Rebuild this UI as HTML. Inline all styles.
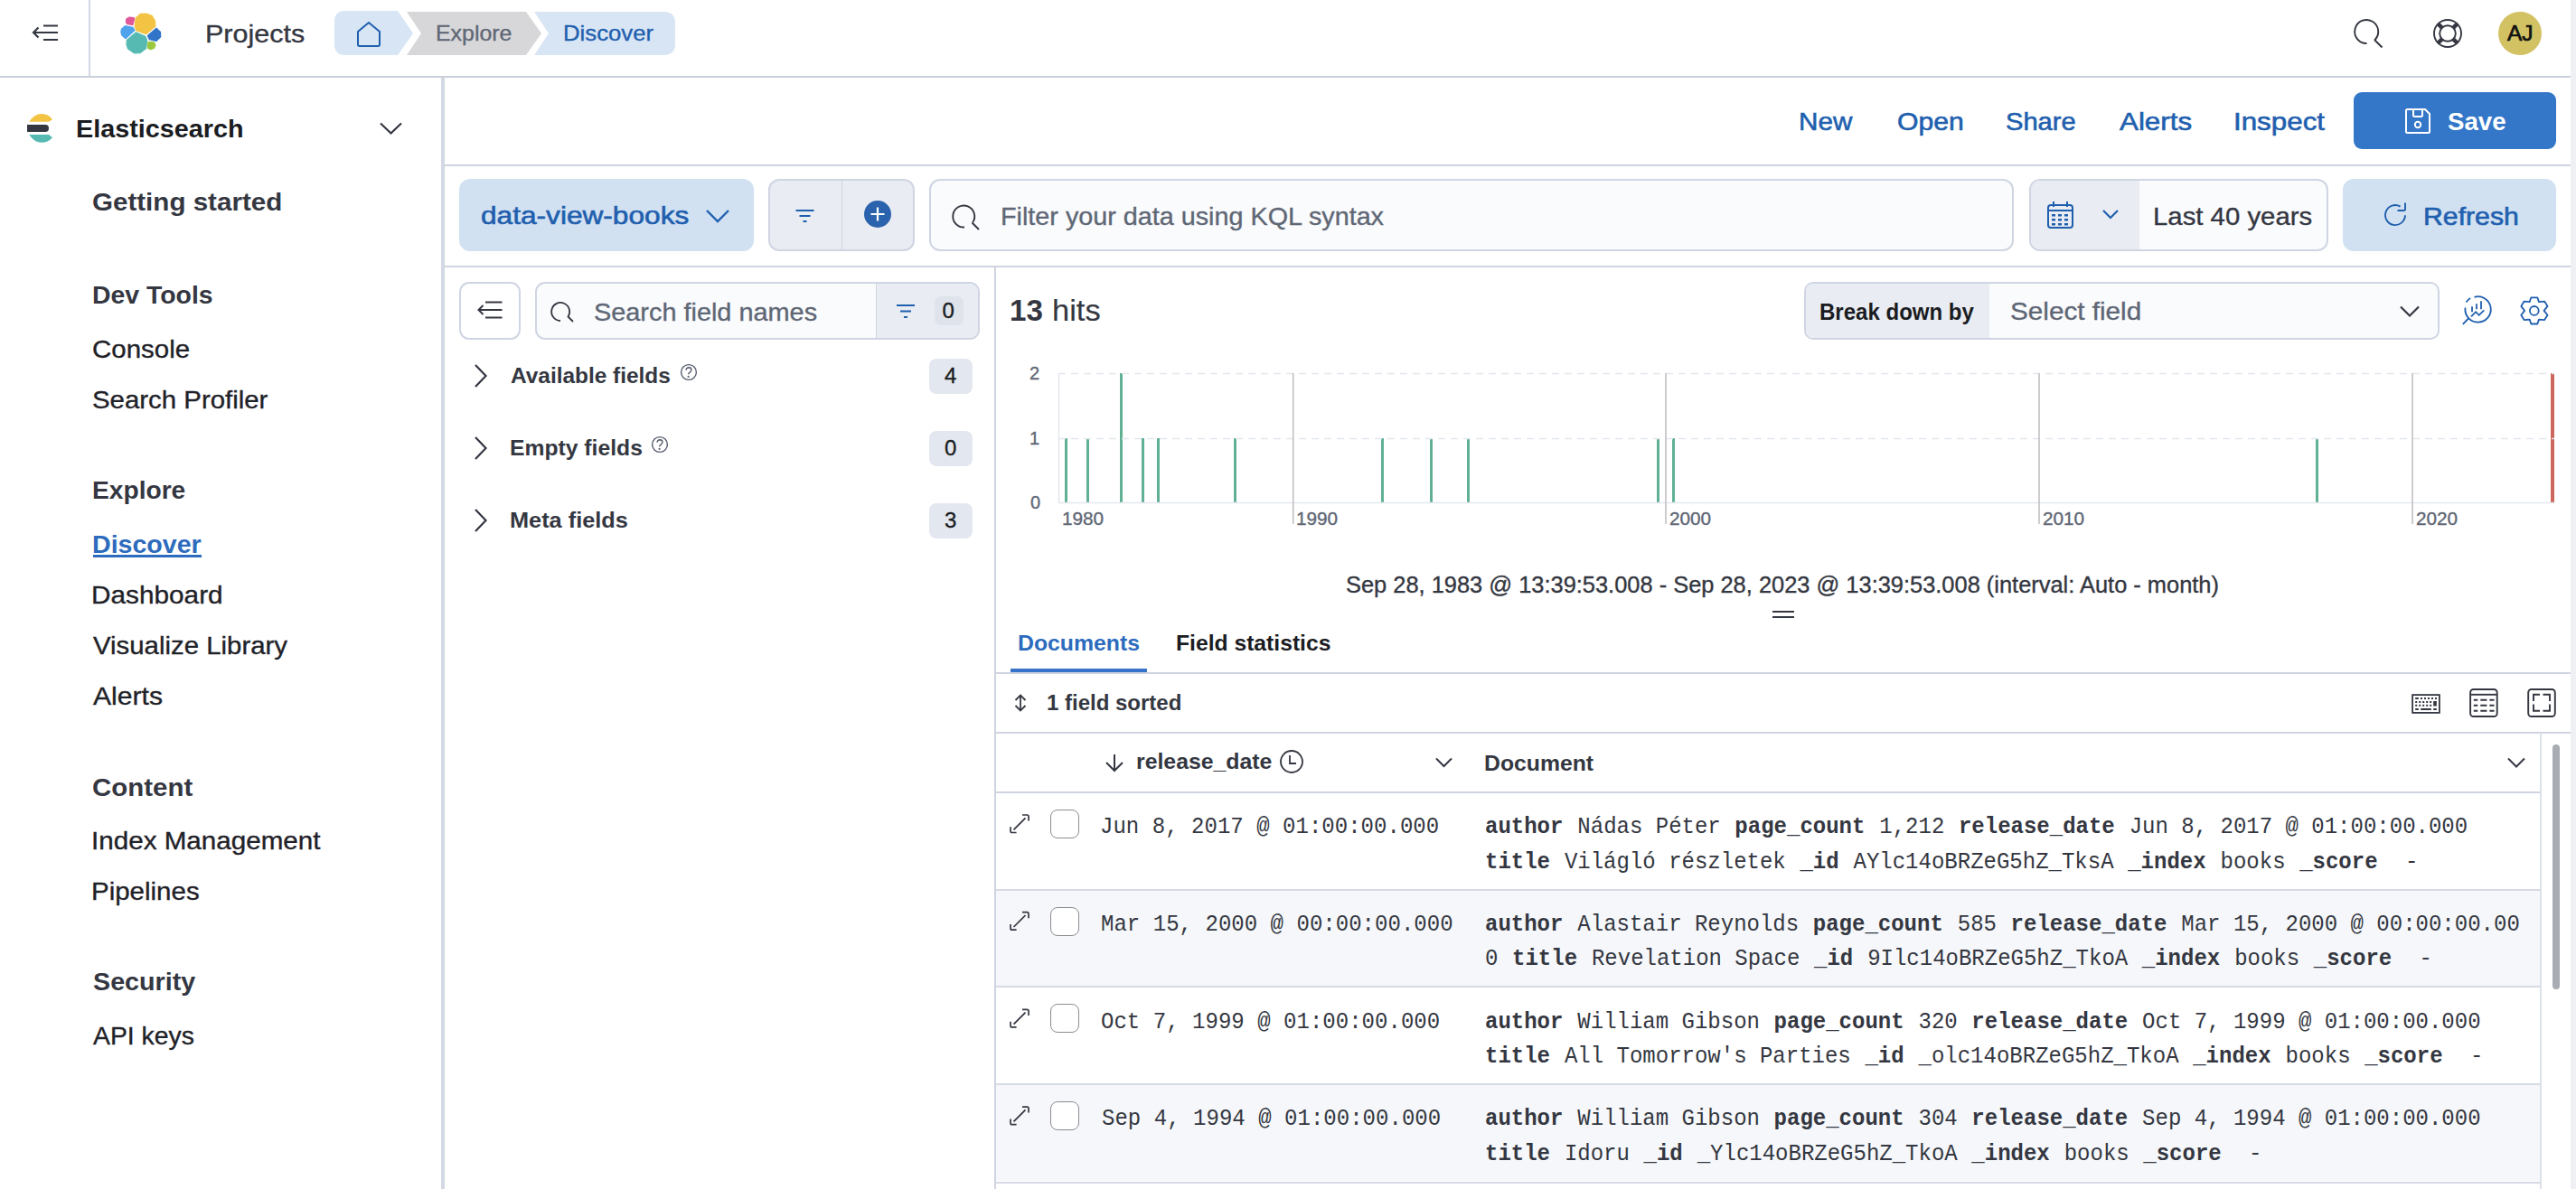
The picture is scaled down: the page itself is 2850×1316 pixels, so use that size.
<!DOCTYPE html>
<html><head><meta charset="utf-8"><title>Discover - Elastic</title>
<style>
html,body{margin:0;padding:0;background:#fff;width:2850px;height:1316px;overflow:hidden;}
#b>div,#t>div{position:absolute;white-space:nowrap;}
#b,#t{position:absolute;left:0;top:0;width:2850px;height:1316px;}
svg{position:absolute;left:0;top:0;}
</style></head><body>
<div id="b"><div style="left:2844px;top:0px;width:6px;height:1316px;background:#eff0f4;border-radius:0px;"></div><div style="left:0px;top:84px;width:2844px;height:2px;background:#cbd0dc;border-radius:0px;"></div><div style="left:98px;top:0px;width:2px;height:84px;background:#d3d8e4;border-radius:0px;"></div><div style="left:488px;top:86px;width:4px;height:1230px;background:#d3d8e4;border-radius:0px;"></div><div style="left:492px;top:182px;width:2352px;height:2px;background:#cfd4e0;border-radius:0px;"></div><div style="left:492px;top:294px;width:2352px;height:2px;background:#cfd4e0;border-radius:0px;"></div><div style="left:1100px;top:296px;width:2px;height:1020px;background:#cfd4e0;border-radius:0px;"></div><div style="left:103px;top:614px;width:119.8px;height:2.5px;background:#2c6bbd;border-radius:0px;"></div><div style="left:2604px;top:102px;width:224px;height:63px;background:#3477c8;border-radius:9px;"></div><div style="left:508px;top:198px;width:326px;height:80px;background:#d1e1f2;border-radius:12px;"></div><div style="left:850px;top:198px;width:162px;height:80px;background:#e9ecf2;border:2px solid #cfd5e2;box-sizing:border-box;border-radius:12px;"></div><div style="left:930.5px;top:200px;width:1.5px;height:76px;background:#cfd5e2;border-radius:0px;"></div><div style="left:1028px;top:198px;width:1200px;height:80px;background:#fafbfd;border:2px solid #cfd5e2;box-sizing:border-box;border-radius:12px;"></div><div style="left:2245px;top:198px;width:331px;height:80px;background:#fafbfd;border:2px solid #cfd5e2;box-sizing:border-box;overflow:hidden;border-radius:12px;"><div style="position:absolute;left:0px;top:0;width:120px;height:100%;background:#e9ecf2"></div></div><div style="left:2592px;top:198px;width:236px;height:80px;background:#d1e1f2;border-radius:12px;"></div><div style="left:508px;top:312px;width:68px;height:64px;background:#fff;border:2px solid #cfd5e2;box-sizing:border-box;border-radius:11px;"></div><div style="left:592px;top:312px;width:492px;height:64px;background:#fafbfd;border:2px solid #cfd5e2;box-sizing:border-box;overflow:hidden;border-radius:11px;"><div style="position:absolute;left:374.5px;top:0;width:120px;height:100%;background:#e9ecf2"></div><div style="position:absolute;left:374.5px;top:0;width:1.5px;height:100%;background:#cfd5e2"></div></div><div style="left:1034px;top:328px;width:32px;height:32px;background:#dfe3eb;border-radius:7px;"></div><div style="left:1028px;top:397px;width:48px;height:39px;background:#e3e7ef;border-radius:8px;"></div><div style="left:1028px;top:477px;width:48px;height:39px;background:#e3e7ef;border-radius:8px;"></div><div style="left:1028px;top:557px;width:48px;height:39px;background:#e3e7ef;border-radius:8px;"></div><div style="left:1996px;top:312px;width:703px;height:64px;background:#fafbfd;border:2px solid #cfd5e2;box-sizing:border-box;overflow:hidden;border-radius:10px;"><div style="position:absolute;left:0px;top:0;width:203px;height:100%;background:#e9ecf2"></div></div><div style="left:1178.0px;top:485px;width:3px;height:71.5px;background:#60b194;border-radius:0px;"></div><div style="left:1201.9px;top:485px;width:3px;height:71.5px;background:#60b194;border-radius:0px;"></div><div style="left:1262.8px;top:485px;width:3px;height:71.5px;background:#60b194;border-radius:0px;"></div><div style="left:1279.9px;top:485px;width:3px;height:71.5px;background:#60b194;border-radius:0px;"></div><div style="left:1364.5px;top:485px;width:3px;height:71.5px;background:#60b194;border-radius:0px;"></div><div style="left:1527.5px;top:485px;width:3px;height:71.5px;background:#60b194;border-radius:0px;"></div><div style="left:1581.5px;top:485px;width:3px;height:71.5px;background:#60b194;border-radius:0px;"></div><div style="left:1622.5px;top:485px;width:3px;height:71.5px;background:#60b194;border-radius:0px;"></div><div style="left:1833.0px;top:485px;width:3px;height:71.5px;background:#60b194;border-radius:0px;"></div><div style="left:1850.0px;top:485px;width:3px;height:71.5px;background:#60b194;border-radius:0px;"></div><div style="left:2562.3px;top:485px;width:3px;height:71.5px;background:#60b194;border-radius:0px;"></div><div style="left:1238.9px;top:413px;width:3px;height:143.5px;background:#60b194;border-radius:0px;"></div><div style="left:2822px;top:413px;width:4px;height:143.5px;background:#cd665c;border-radius:0px;"></div><div style="left:1961px;top:675.5px;width:24px;height:2px;background:#343741;border-radius:0px;"></div><div style="left:1961px;top:682px;width:24px;height:2px;background:#343741;border-radius:0px;"></div><div style="left:1102px;top:744px;width:1742px;height:2px;background:#cfd4e0;border-radius:0px;"></div><div style="left:1118px;top:740px;width:151px;height:4px;background:#3574c8;border-radius:0px;"></div><div style="left:1102px;top:810px;width:1742px;height:2px;background:#cfd4e0;border-radius:0px;"></div><div style="left:1102px;top:876px;width:1709px;height:2px;background:#cfd4e0;border-radius:0px;"></div><div style="left:2810px;top:811px;width:2px;height:505px;background:#dde2ea;border-radius:0px;"></div><div style="left:2824px;top:824px;width:8px;height:271px;background:#a9acb3;border-radius:4px;"></div><div style="left:1162px;top:896.0px;width:32px;height:32px;background:#fff;border:1.8px solid #8a8c90;box-sizing:border-box;border-radius:8px;"></div><div style="left:1102px;top:985.7px;width:1708px;height:105.7px;background:#f5f7fa;border-radius:0px;"></div><div style="left:1102px;top:983.7px;width:1709px;height:2px;background:#d5dae4;border-radius:0px;"></div><div style="left:1162px;top:1003.7px;width:32px;height:32px;background:#fff;border:1.8px solid #8a8c90;box-sizing:border-box;border-radius:8px;"></div><div style="left:1102px;top:1091.4px;width:1709px;height:2px;background:#d5dae4;border-radius:0px;"></div><div style="left:1162px;top:1111.4px;width:32px;height:32px;background:#fff;border:1.8px solid #8a8c90;box-sizing:border-box;border-radius:8px;"></div><div style="left:1102px;top:1201.1px;width:1708px;height:105.7px;background:#f5f7fa;border-radius:0px;"></div><div style="left:1102px;top:1199.1px;width:1709px;height:2px;background:#d5dae4;border-radius:0px;"></div><div style="left:1162px;top:1219.1000000000001px;width:32px;height:32px;background:#fff;border:1.8px solid #8a8c90;box-sizing:border-box;border-radius:8px;"></div><div style="left:1102px;top:1308px;width:1709px;height:2px;background:#d5dae4;border-radius:0px;"></div></div>
<svg width="2850" height="1316" viewBox="0 0 2850 1316"><g stroke="#343741" stroke-width="2.2" fill="none" stroke-linecap="butt"><path d="M48 28.5H64M37 36H64M48 44H64"/><path d="M42.5 30.5L37 36L42.5 41.5" stroke-linejoin="miter"/></g><g transform="translate(128,10)" stroke-linejoin="round" stroke-width="1.2"><path fill="#e0579a" stroke="#e0579a" d="M11.8 10.9L15 9.1L20 9.5L20.7 10.9L18.8 17.7L12.3 16.3L11.4 14.1Z"/><path fill="#f3c343" stroke="#f3c343" d="M22.3 10L27.2 5.4L33.6 5L40 7.3L43.6 13.2L43.8 19.1L33.6 27.7L22.7 23.6L21.1 18.6Z"/><path fill="#4fa3ec" stroke="#4fa3ec" d="M6.4 22.3L10.4 18.6L19.1 20.4L20.9 23.6L10.9 32.7L6.8 29.1L5.9 25.4Z"/><path fill="#3275c8" stroke="#3275c8" d="M35.4 29.5L45 21.1L49.5 25.4L49.7 30.9L45 35.4L37.2 33.6Z"/><path fill="#56bab3" stroke="#56bab3" d="M12.3 34.5L22.3 25.9L32.7 30.2L34.7 34.5L33.6 43.6L27.2 48.6L20.4 48.8L13.6 44L12 39Z"/><path fill="#9bc83c" stroke="#9bc83c" d="M36.3 36.3L42.2 36.8L44 39.5L42.7 43.1L39 44.7L35.9 43.6L35.4 40Z"/></g><path fill="#d8e5f5" d="M382 12H440L457 37L440 61H382Q370 61 370 49V24Q370 12 382 12Z"/><path fill="#d7d7d9" d="M450 13H582L599 37L582 61H450L466 37Z"/><path fill="#d8e5f5" d="M591 13H734Q747 13 747 25V49Q747 61 734 61H591L607 37Z"/><path fill="none" stroke="#1f5fae" stroke-width="2" stroke-linejoin="round" d="M396 35L408 25L420 35V49.3Q420 51 418.3 51H397.7Q396 51 396 49.3Z"/><g fill="none" stroke="#343741" stroke-width="1.9"><path d="M2618.5 48A13 13 0 1 1 2627.2 44.4"/><path d="M2627 44L2635.5 52.5"/></g><g fill="none" stroke="#343741" stroke-width="1.9"><circle cx="2708" cy="37" r="15"/><circle cx="2708" cy="37" r="8.8"/></g><g stroke="#343741" stroke-width="4.5"><path d="M2697.5 26.5L2701.7 30.7M2718.5 26.5L2714.3 30.7M2697.5 47.5L2701.7 43.3M2718.5 47.5L2714.3 43.3"/></g><circle cx="2788" cy="37" r="24" fill="#d3c264"/><g><path fill="#f3c343" d="M32.2 134.8Q38 126 46 126Q53.5 126 58 132.2L54 134.8Z"/><path fill="#343741" d="M30 138H50.2Q54 138 54 142Q54 146 50.2 146H30Z"/><path fill="#56bab3" d="M32.2 149H54L58 152.2Q53 157.8 46 157.8Q38 157.8 32.2 149Z"/></g><path d="M421 136.5L432.5 147.5L444 136.5" fill="none" stroke="#343741" stroke-width="2.2"/><g fill="none" stroke="#fff" stroke-width="2" stroke-linejoin="round"><path d="M2663.5 121H2683L2688 126V145.5Q2688 147 2686.5 147H2663.5Q2662 147 2662 145.5V122.5Q2662 121 2663.5 121Z"/><path d="M2670 121V127.5Q2670 129 2671.5 129H2678.5Q2680 129 2680 127.5V121"/><circle cx="2675" cy="138" r="3.2"/></g><path d="M782 233L794 245L806 233" fill="none" stroke="#1f5fae" stroke-width="2.4"/><g stroke="#1f5fae" stroke-width="2"><path d="M880.5 233H900.5M884.5 239H896.5M888.5 245H892.5"/></g><circle cx="971" cy="237" r="15" fill="#2b62ad"/><path d="M971 229.5V244.5M963.5 237H978.5" stroke="#fff" stroke-width="2.2"/><g fill="none" stroke="#343741" stroke-width="1.9"><path d="M1067 251.5A12 12 0 1 1 1076 246.5"/><path d="M1075.5 246.5L1083 254"/></g><g fill="none" stroke="#1f5fae" stroke-width="2"><rect x="2266" y="227" width="27" height="25" rx="3"/><path d="M2272 223V229M2287 223V229M2266 233H2293"/></g><g fill="#1f5fae"><rect x="2270" y="237" width="4" height="2.5"/><rect x="2277" y="237" width="4" height="2.5"/><rect x="2284" y="237" width="4" height="2.5"/><rect x="2270" y="242" width="4" height="2.5"/><rect x="2277" y="242" width="4" height="2.5"/><rect x="2284" y="242" width="4" height="2.5"/><rect x="2270" y="247" width="4" height="2.5"/><rect x="2277" y="247" width="4" height="2.5"/><rect x="2284" y="247" width="4" height="2.5"/></g><path d="M2327 233L2335 241L2343 233" fill="none" stroke="#1f5fae" stroke-width="2.2"/><g fill="none" stroke="#1f5fae" stroke-width="1.9"><path d="M2661 238.3A11 11 0 1 1 2655.6 228.6"/><path d="M2661 224.5V232.2L2659.8 233H2652.5"/></g><g stroke="#343741" stroke-width="2" fill="none"><path d="M537 334.5H555.5M529.5 343H555.5M537 351.5H555.5"/><path d="M534.5 338L529.5 343L534.5 348"/></g><g fill="none" stroke="#343741" stroke-width="1.8"><path d="M620 355A10 10 0 1 1 628.5 350.5"/><path d="M628 350L634 356"/></g><g stroke="#1f5fae" stroke-width="1.8"><path d="M992 338H1012M996 344.5H1008M1000 351H1004"/></g><path d="M526 404L537.5 416L526 428" fill="none" stroke="#343741" stroke-width="2.2"/><g fill="none" stroke="#555c6b" stroke-width="1.4"><circle cx="762" cy="412" r="8.4"/><path d="M759 409.6Q759.4 406.8 762.1 406.7Q764.9 406.7 764.9 409.2Q764.9 411 762.9 412.4Q761.6 413.3 761.6 414.3"/></g><circle cx="761.6" cy="416.8" r="1.1" fill="#555c6b"/><path d="M526 484L537.5 496L526 508" fill="none" stroke="#343741" stroke-width="2.2"/><g fill="none" stroke="#555c6b" stroke-width="1.4"><circle cx="730" cy="492" r="8.4"/><path d="M727 489.6Q727.4 486.8 730.1 486.7Q732.9 486.7 732.9 489.2Q732.9 491 730.9 492.4Q729.6 493.3 729.6 494.3"/></g><circle cx="729.6" cy="496.8" r="1.1" fill="#555c6b"/><path d="M526 564L537.5 576L526 588" fill="none" stroke="#343741" stroke-width="2.2"/><path d="M2656 339.5L2666 349.5L2676 339.5" fill="none" stroke="#343741" stroke-width="2.2"/><g fill="none" stroke="#1f5fae" stroke-width="1.8"><path d="M2737.5 328.8A14.2 14.2 0 1 1 2727.5 340.5"/><path d="M2728.5 334.5A14.2 14.2 0 0 1 2733.2 330"/><path d="M2731 352.5L2724.8 358.8"/><path d="M2734 350.3L2739.1 345.2L2742.7 348.8L2748.3 343.3"/><path d="M2735 339.2V345.2M2740 336.3V342.3M2745 333.2V342.3"/></g><g fill="none" stroke="#1f5fae" stroke-width="1.8" stroke-linejoin="round"><circle cx="2803.8" cy="343.9" r="4.9"/><path d="M2800.3 329.3H2807.3L2809 334.1L2815.2 333.6L2818.5 338.9L2814.6 343.9L2818.5 348.8L2815.2 354.1L2809 353.6L2807.3 358.5H2800.3L2798.7 353.6L2792.6 354.1L2789.3 348.8L2793.1 343.9L2789.3 338.9L2792.6 333.6L2798.7 334.1Z"/></g><g stroke="#e3e7ee" stroke-width="1.5" stroke-dasharray="8 6"><path d="M1171 413.5H2826M1171 485.5H2826"/></g><path d="M1171 556.5H2826" stroke="#e3e7ee" stroke-width="1.5"/><path d="M1171.5 413V557" stroke="#e3e7ee" stroke-width="1.5"/><path d="M1430.7 413V580" stroke="#bdbdbd" stroke-width="1.5"/><path d="M1843 413V580" stroke="#bdbdbd" stroke-width="1.5"/><path d="M2256 413V580" stroke="#bdbdbd" stroke-width="1.5"/><path d="M2669 413V580" stroke="#bdbdbd" stroke-width="1.5"/><g fill="none" stroke="#343741" stroke-width="1.8"><path d="M1129 770V786"/><path d="M1123.5 775L1129 769.5L1134.5 775M1123.5 781L1129 786.5L1134.5 781"/></g><g fill="none" stroke="#343741" stroke-width="1.8"><rect x="2669.1" y="769.1" width="29.8" height="19.8"/></g><g fill="#343741"><rect x="2672.2" y="772" width="3.6" height="2"/><rect x="2678" y="772" width="2" height="2"/><rect x="2682" y="772" width="2" height="2"/><rect x="2686" y="772" width="2" height="2"/><rect x="2690" y="772" width="2" height="2"/><rect x="2694" y="772" width="2" height="2"/><rect x="2672.2" y="776" width="2" height="2"/><rect x="2676.2" y="776" width="2" height="2"/><rect x="2680.2" y="776" width="2" height="2"/><rect x="2684.2" y="776" width="2" height="2"/><rect x="2688.2" y="776" width="2" height="2"/><rect x="2672.2" y="779.8" width="2" height="2"/><rect x="2676.2" y="779.8" width="2" height="2"/><rect x="2680.2" y="779.8" width="2" height="2"/><rect x="2684.2" y="779.8" width="2" height="2"/><rect x="2688.2" y="779.8" width="2" height="2"/><rect x="2692.2" y="776" width="3.6" height="5.5"/><rect x="2672.2" y="784" width="3.6" height="2"/><rect x="2678.2" y="784" width="11.6" height="2"/><rect x="2692.2" y="784" width="3.6" height="2"/></g><g fill="none" stroke="#343741" stroke-width="1.9"><rect x="2733.1" y="763" width="29.6" height="30" rx="3.5"/><path d="M2733 768.8H2763"/><path d="M2736.8 774.7H2741.3M2744.3 774.7H2751.4M2754.4 774.7H2759.5M2736.8 780.8H2741.3M2744.3 780.8H2751.4M2754.4 780.8H2759.5M2736.8 786.8H2741.3M2744.3 786.8H2751.4M2754.4 786.8H2759.5"/></g><g fill="none" stroke="#343741" stroke-width="1.9"><rect x="2797.2" y="763" width="29.6" height="30" rx="3.5"/><path d="M2803 776V768.7H2810M2813.5 768.7H2821V776M2821 779.5V786.8H2813.5M2810 786.8H2803V779.5"/></g><g fill="none" stroke="#343741" stroke-width="2"><path d="M1233 835V853"/><path d="M1224 844L1233 853L1242 844"/></g><g fill="none" stroke="#343741" stroke-width="1.8"><circle cx="1429" cy="843" r="12"/><path d="M1427 836V845H1434"/></g><path d="M1589 839.5L1597.5 848L1606 839.5" fill="none" stroke="#343741" stroke-width="2"/><path d="M2775 839.5L2784 848.5L2793 839.5" fill="none" stroke="#343741" stroke-width="2"/><g fill="none" stroke="#343741" stroke-width="1.7"><path d="M1121.5 918.3L1134.5 905.3"/><path d="M1131 902.0H1136.3Q1138 902.0 1138 903.6999999999999V908.5M1118 915.3V919.8Q1118 921.5 1119.7 921.5H1124.6"/></g><g fill="none" stroke="#343741" stroke-width="1.7"><path d="M1121.5 1026.0L1134.5 1013.0"/><path d="M1131 1009.7H1136.3Q1138 1009.7 1138 1011.4V1016.2M1118 1023.0V1027.5Q1118 1029.2 1119.7 1029.2H1124.6"/></g><g fill="none" stroke="#343741" stroke-width="1.7"><path d="M1121.5 1133.7L1134.5 1120.7"/><path d="M1131 1117.4H1136.3Q1138 1117.4 1138 1119.1000000000001V1123.9M1118 1130.7V1135.2Q1118 1136.9 1119.7 1136.9H1124.6"/></g><g fill="none" stroke="#343741" stroke-width="1.7"><path d="M1121.5 1241.4L1134.5 1228.4"/><path d="M1131 1225.1000000000001H1136.3Q1138 1225.1000000000001 1138 1226.8000000000002V1231.6000000000001M1118 1238.4V1242.9Q1118 1244.6000000000001 1119.7 1244.6000000000001H1124.6"/></g></svg>
<div id="t"><div style="left:226.82px;top:24px;font:28px/28px 'Liberation Sans', sans-serif;color:#343741;letter-spacing:0.000px;transform:scaleX(1.0902);transform-origin:0 0;-webkit-text-stroke:0.35px #343741;">Projects</div><div style="left:481.96px;top:25px;font:24px/24px 'Liberation Sans', sans-serif;color:#5f6775;letter-spacing:0.000px;transform:scaleX(1.0371);transform-origin:0 0;-webkit-text-stroke:0.35px #5f6775;">Explore</div><div style="left:622.93px;top:25px;font:24px/24px 'Liberation Sans', sans-serif;color:#1f5fae;letter-spacing:0.000px;transform:scaleX(1.0719);transform-origin:0 0;-webkit-text-stroke:0.35px #1f5fae;">Discover</div><div style="left:2774.00px;top:25px;font:24px/24px 'Liberation Sans', sans-serif;color:#111;letter-spacing:0.000px;transform:scaleX(1.0182);transform-origin:0 0;-webkit-text-stroke:0.7px #111;">AJ</div><div style="left:83.97px;top:129px;font:bold 28px/28px 'Liberation Sans', sans-serif;color:#1a1c21;letter-spacing:0.000px;transform:scaleX(1.0277);transform-origin:0 0;">Elasticsearch</div><div style="left:101.94px;top:209.5px;font:bold 28px/28px 'Liberation Sans', sans-serif;color:#343741;letter-spacing:0.000px;transform:scaleX(1.0557);transform-origin:0 0;">Getting started</div><div style="left:101.99px;top:313px;font:bold 28px/28px 'Liberation Sans', sans-serif;color:#343741;letter-spacing:0.000px;transform:scaleX(1.0142);transform-origin:0 0;">Dev Tools</div><div style="left:101.95px;top:372.7px;font:28px/28px 'Liberation Sans', sans-serif;color:#1f2228;letter-spacing:0.000px;transform:scaleX(1.0518);transform-origin:0 0;-webkit-text-stroke:0.35px #1f2228;">Console</div><div style="left:101.95px;top:429px;font:28px/28px 'Liberation Sans', sans-serif;color:#1f2228;letter-spacing:0.000px;transform:scaleX(1.0497);transform-origin:0 0;-webkit-text-stroke:0.35px #1f2228;">Search Profiler</div><div style="left:101.99px;top:529px;font:bold 28px/28px 'Liberation Sans', sans-serif;color:#343741;letter-spacing:0.000px;transform:scaleX(1.0056);transform-origin:0 0;">Explore</div><div style="left:101.98px;top:589px;font:bold 28px/28px 'Liberation Sans', sans-serif;color:#2c6bbd;letter-spacing:0.000px;transform:scaleX(1.0205);transform-origin:0 0;">Discover</div><div style="left:100.87px;top:645px;font:28px/28px 'Liberation Sans', sans-serif;color:#1f2228;letter-spacing:0.000px;transform:scaleX(1.0629);transform-origin:0 0;-webkit-text-stroke:0.35px #1f2228;">Dashboard</div><div style="left:103.00px;top:701px;font:28px/28px 'Liberation Sans', sans-serif;color:#1f2228;letter-spacing:0.000px;transform:scaleX(1.0492);transform-origin:0 0;-webkit-text-stroke:0.35px #1f2228;">Visualize Library</div><div style="left:103.00px;top:757px;font:28px/28px 'Liberation Sans', sans-serif;color:#1f2228;letter-spacing:0.000px;transform:scaleX(1.0769);transform-origin:0 0;-webkit-text-stroke:0.35px #1f2228;">Alerts</div><div style="left:101.95px;top:857.5px;font:bold 28px/28px 'Liberation Sans', sans-serif;color:#343741;letter-spacing:0.000px;transform:scaleX(1.0514);transform-origin:0 0;">Content</div><div style="left:100.89px;top:917px;font:28px/28px 'Liberation Sans', sans-serif;color:#1f2228;letter-spacing:0.000px;transform:scaleX(1.0575);transform-origin:0 0;-webkit-text-stroke:0.35px #1f2228;">Index Management</div><div style="left:100.89px;top:972.5px;font:28px/28px 'Liberation Sans', sans-serif;color:#1f2228;letter-spacing:0.000px;transform:scaleX(1.0531);transform-origin:0 0;-webkit-text-stroke:0.35px #1f2228;">Pipelines</div><div style="left:103.00px;top:1072.6px;font:bold 28px/28px 'Liberation Sans', sans-serif;color:#343741;letter-spacing:0.000px;transform:scaleX(1.0241);transform-origin:0 0;">Security</div><div style="left:103.00px;top:1132.5px;font:28px/28px 'Liberation Sans', sans-serif;color:#1f2228;letter-spacing:0.000px;transform:scaleX(1.0129);transform-origin:0 0;-webkit-text-stroke:0.35px #1f2228;">API keys</div><div style="left:1989.88px;top:121px;font:28px/28px 'Liberation Sans', sans-serif;color:#1f5fae;letter-spacing:0.000px;transform:scaleX(1.0585);transform-origin:0 0;-webkit-text-stroke:0.6px #1f5fae;">New</div><div style="left:2098.92px;top:121px;font:28px/28px 'Liberation Sans', sans-serif;color:#1f5fae;letter-spacing:0.000px;transform:scaleX(1.0770);transform-origin:0 0;-webkit-text-stroke:0.6px #1f5fae;">Open</div><div style="left:2218.96px;top:121px;font:28px/28px 'Liberation Sans', sans-serif;color:#1f5fae;letter-spacing:0.000px;transform:scaleX(1.0390);transform-origin:0 0;-webkit-text-stroke:0.6px #1f5fae;">Share</div><div style="left:2345.00px;top:121px;font:28px/28px 'Liberation Sans', sans-serif;color:#1f5fae;letter-spacing:0.000px;transform:scaleX(1.1194);transform-origin:0 0;-webkit-text-stroke:0.6px #1f5fae;">Alerts</div><div style="left:2470.76px;top:121px;font:28px/28px 'Liberation Sans', sans-serif;color:#1f5fae;letter-spacing:0.000px;transform:scaleX(1.1187);transform-origin:0 0;-webkit-text-stroke:0.6px #1f5fae;">Inspect</div><div style="left:2708.00px;top:121px;font:bold 28px/28px 'Liberation Sans', sans-serif;color:#fff;letter-spacing:0.000px;transform:scaleX(0.9873);transform-origin:0 0;">Save</div><div style="left:531.87px;top:225px;font:28px/28px 'Liberation Sans', sans-serif;color:#1f5fae;letter-spacing:0.000px;transform:scaleX(1.1294);transform-origin:0 0;-webkit-text-stroke:0.6px #1f5fae;">data-view-books</div><div style="left:1106.95px;top:226px;font:28px/28px 'Liberation Sans', sans-serif;color:#5f6775;letter-spacing:0.000px;transform:scaleX(1.0268);transform-origin:0 0;-webkit-text-stroke:0.35px #5f6775;">Filter your data using KQL syntax</div><div style="left:2381.90px;top:226px;font:28px/28px 'Liberation Sans', sans-serif;color:#343741;letter-spacing:0.000px;transform:scaleX(1.0479);transform-origin:0 0;-webkit-text-stroke:0.35px #343741;">Last 40 years</div><div style="left:2680.84px;top:226px;font:28px/28px 'Liberation Sans', sans-serif;color:#1f5fae;letter-spacing:0.000px;transform:scaleX(1.0797);transform-origin:0 0;-webkit-text-stroke:0.6px #1f5fae;">Refresh</div><div style="left:657.47px;top:332px;font:28px/28px 'Liberation Sans', sans-serif;color:#5f6775;letter-spacing:0.000px;transform:scaleX(1.0308);transform-origin:0 0;-webkit-text-stroke:0.35px #5f6775;">Search field names</div><div style="left:1042.50px;top:332px;font:24px/24px 'Liberation Sans', sans-serif;color:#1a1c21;letter-spacing:0.000px;-webkit-text-stroke:0.35px #1a1c21;">0</div><div style="left:565.00px;top:404px;font:bold 24px/24px 'Liberation Sans', sans-serif;color:#343741;letter-spacing:0.000px;transform:scaleX(1.0173);transform-origin:0 0;">Available fields</div><div style="left:1045.00px;top:403.5px;font:24px/24px 'Liberation Sans', sans-serif;color:#1a1c21;letter-spacing:0.000px;-webkit-text-stroke:0.35px #1a1c21;">4</div><div style="left:563.97px;top:484px;font:bold 24px/24px 'Liberation Sans', sans-serif;color:#343741;letter-spacing:0.000px;transform:scaleX(1.0293);transform-origin:0 0;">Empty fields</div><div style="left:1045.00px;top:483.5px;font:24px/24px 'Liberation Sans', sans-serif;color:#1a1c21;letter-spacing:0.000px;-webkit-text-stroke:0.35px #1a1c21;">0</div><div style="left:563.95px;top:564px;font:bold 24px/24px 'Liberation Sans', sans-serif;color:#343741;letter-spacing:0.000px;transform:scaleX(1.0547);transform-origin:0 0;">Meta fields</div><div style="left:1045.00px;top:563.5px;font:24px/24px 'Liberation Sans', sans-serif;color:#1a1c21;letter-spacing:0.000px;-webkit-text-stroke:0.35px #1a1c21;">3</div><div style="left:1116.99px;top:327px;font:bold 33px/33px 'Liberation Sans', sans-serif;color:#343741;letter-spacing:0.000px;transform:scaleX(1.0043);transform-origin:0 0;">13</div><div style="left:1163.91px;top:327px;font:33px/33px 'Liberation Sans', sans-serif;color:#343741;letter-spacing:0.000px;transform:scaleX(1.0439);transform-origin:0 0;-webkit-text-stroke:0.15px #343741;">hits</div><div style="left:2013.04px;top:333px;font:bold 25px/25px 'Liberation Sans', sans-serif;color:#1a1c21;letter-spacing:0.000px;transform:scaleX(0.9609);transform-origin:0 0;">Break down by</div><div style="left:2224.44px;top:331px;font:28px/28px 'Liberation Sans', sans-serif;color:#5f6775;letter-spacing:0.000px;transform:scaleX(1.0603);transform-origin:0 0;-webkit-text-stroke:0.35px #5f6775;">Select field</div><div style="left:1174.96px;top:564px;font:20px/20px 'Liberation Sans', sans-serif;color:#5f6775;letter-spacing:0.000px;transform:scaleX(1.0376);transform-origin:0 0;-webkit-text-stroke:0.35px #5f6775;">1980</div><div style="left:1433.96px;top:564px;font:20px/20px 'Liberation Sans', sans-serif;color:#5f6775;letter-spacing:0.000px;transform:scaleX(1.0376);transform-origin:0 0;-webkit-text-stroke:0.35px #5f6775;">1990</div><div style="left:1846.96px;top:564px;font:20px/20px 'Liberation Sans', sans-serif;color:#5f6775;letter-spacing:0.000px;transform:scaleX(1.0376);transform-origin:0 0;-webkit-text-stroke:0.35px #5f6775;">2000</div><div style="left:2259.96px;top:564px;font:20px/20px 'Liberation Sans', sans-serif;color:#5f6775;letter-spacing:0.000px;transform:scaleX(1.0376);transform-origin:0 0;-webkit-text-stroke:0.35px #5f6775;">2010</div><div style="left:2672.96px;top:564px;font:20px/20px 'Liberation Sans', sans-serif;color:#5f6775;letter-spacing:0.000px;transform:scaleX(1.0376);transform-origin:0 0;-webkit-text-stroke:0.35px #5f6775;">2020</div><div style="left:1139.00px;top:403px;font:20px/20px 'Liberation Sans', sans-serif;color:#5f6775;letter-spacing:0.000px;-webkit-text-stroke:0.35px #5f6775;">2</div><div style="left:1139.00px;top:475px;font:20px/20px 'Liberation Sans', sans-serif;color:#5f6775;letter-spacing:0.000px;-webkit-text-stroke:0.35px #5f6775;">1</div><div style="left:1140.00px;top:546px;font:20px/20px 'Liberation Sans', sans-serif;color:#5f6775;letter-spacing:0.000px;-webkit-text-stroke:0.35px #5f6775;">0</div><div style="left:1488.98px;top:634.8px;font:25px/25px 'Liberation Sans', sans-serif;color:#343741;letter-spacing:0.000px;transform:scaleX(1.0168);transform-origin:0 0;-webkit-text-stroke:0.35px #343741;">Sep 28, 1983 @ 13:39:53.008 - Sep 28, 2023 @ 13:39:53.008 (interval: Auto - month)</div><div style="left:1125.67px;top:700px;font:bold 24px/24px 'Liberation Sans', sans-serif;color:#2c6bbd;letter-spacing:0.000px;transform:scaleX(1.0329);transform-origin:0 0;">Documents</div><div style="left:1301.17px;top:700px;font:bold 24px/24px 'Liberation Sans', sans-serif;color:#1a1c21;letter-spacing:0.000px;transform:scaleX(1.0280);transform-origin:0 0;">Field statistics</div><div style="left:1158.00px;top:766px;font:bold 24px/24px 'Liberation Sans', sans-serif;color:#343741;letter-spacing:0.000px;">1 field sorted</div><div style="left:1257.37px;top:831px;font:bold 24px/24px 'Liberation Sans', sans-serif;color:#343741;letter-spacing:0.000px;transform:scaleX(1.0340);transform-origin:0 0;">release_date</div><div style="left:1641.77px;top:833px;font:bold 24px/24px 'Liberation Sans', sans-serif;color:#343741;letter-spacing:0.000px;transform:scaleX(1.0314);transform-origin:0 0;">Document</div><div style="left:1217.12px;top:903.3px;font:25.5px/25.5px 'Liberation Mono', monospace;color:#343741;letter-spacing:0.030px;transform:scaleX(0.9412);transform-origin:0 0;">Jun 8, 2017 @ 01:00:00.000</div><div style="left:1643px;top:903.3px;font:25.5px/25.5px 'Liberation Mono', monospace;color:#343741;white-space:pre;transform:scaleX(0.9412);transform-origin:0 0"><b style="font-weight:700">author</b><span style="margin-left:16.9px">Nádas Péter</span><span style="margin-left:16.6px"></span><b style="font-weight:700">page_count</b><span style="margin-left:16.9px">1,212</span><span style="margin-left:16.6px"></span><b style="font-weight:700">release_date</b><span style="margin-left:16.9px">Jun 8, 2017 @ 01:00:00.000</span><span style="margin-left:16.6px"></span></div><div style="left:1643px;top:941.5999999999999px;font:25.5px/25.5px 'Liberation Mono', monospace;color:#343741;white-space:pre;transform:scaleX(0.9412);transform-origin:0 0"><b style="font-weight:700">title</b><span style="margin-left:16.9px">Világló részletek</span><span style="margin-left:16.6px"></span><b style="font-weight:700">_id</b><span style="margin-left:16.9px">AYlc14oBRZeG5hZ_TksA</span><span style="margin-left:16.6px"></span><b style="font-weight:700">_index</b><span style="margin-left:16.9px">books</span><span style="margin-left:16.6px"></span><b style="font-weight:700">_score</b><span style="margin-left:16.9px"> -</span><span style="margin-left:16.6px"></span></div><div style="left:1218.06px;top:1011.0px;font:25.5px/25.5px 'Liberation Mono', monospace;color:#343741;letter-spacing:0.030px;transform:scaleX(0.9412);transform-origin:0 0;">Mar 15, 2000 @ 00:00:00.000</div><div style="left:1643px;top:1011.0px;font:25.5px/25.5px 'Liberation Mono', monospace;color:#343741;white-space:pre;transform:scaleX(0.9412);transform-origin:0 0"><b style="font-weight:700">author</b><span style="margin-left:16.9px">Alastair Reynolds</span><span style="margin-left:16.6px"></span><b style="font-weight:700">page_count</b><span style="margin-left:16.9px">585</span><span style="margin-left:16.6px"></span><b style="font-weight:700">release_date</b><span style="margin-left:16.9px">Mar 15, 2000 @ 00:00:00.00</span><span style="margin-left:16.6px"></span></div><div style="left:1643px;top:1049.3px;font:25.5px/25.5px 'Liberation Mono', monospace;color:#343741;white-space:pre;transform:scaleX(0.9412);transform-origin:0 0"><span>0</span><span style="margin-left:16.6px"></span><b style="font-weight:700">title</b><span style="margin-left:16.9px">Revelation Space</span><span style="margin-left:16.6px"></span><b style="font-weight:700">_id</b><span style="margin-left:16.9px">9Ilc14oBRZeG5hZ_TkoA</span><span style="margin-left:16.6px"></span><b style="font-weight:700">_index</b><span style="margin-left:16.9px">books</span><span style="margin-left:16.6px"></span><b style="font-weight:700">_score</b><span style="margin-left:16.9px"> -</span><span style="margin-left:16.6px"></span></div><div style="left:1218.06px;top:1118.7px;font:25.5px/25.5px 'Liberation Mono', monospace;color:#343741;letter-spacing:0.030px;transform:scaleX(0.9412);transform-origin:0 0;">Oct 7, 1999 @ 01:00:00.000</div><div style="left:1643px;top:1118.7px;font:25.5px/25.5px 'Liberation Mono', monospace;color:#343741;white-space:pre;transform:scaleX(0.9412);transform-origin:0 0"><b style="font-weight:700">author</b><span style="margin-left:16.9px">William Gibson</span><span style="margin-left:16.6px"></span><b style="font-weight:700">page_count</b><span style="margin-left:16.9px">320</span><span style="margin-left:16.6px"></span><b style="font-weight:700">release_date</b><span style="margin-left:16.9px">Oct 7, 1999 @ 01:00:00.000</span><span style="margin-left:16.6px"></span></div><div style="left:1643px;top:1157.0px;font:25.5px/25.5px 'Liberation Mono', monospace;color:#343741;white-space:pre;transform:scaleX(0.9412);transform-origin:0 0"><b style="font-weight:700">title</b><span style="margin-left:16.9px">All Tomorrow&#x27;s Parties</span><span style="margin-left:16.6px"></span><b style="font-weight:700">_id</b><span style="margin-left:16.9px">_olc14oBRZeG5hZ_TkoA</span><span style="margin-left:16.6px"></span><b style="font-weight:700">_index</b><span style="margin-left:16.9px">books</span><span style="margin-left:16.6px"></span><b style="font-weight:700">_score</b><span style="margin-left:16.9px"> -</span><span style="margin-left:16.6px"></span></div><div style="left:1219.00px;top:1226.4px;font:25.5px/25.5px 'Liberation Mono', monospace;color:#343741;letter-spacing:0.030px;transform:scaleX(0.9412);transform-origin:0 0;">Sep 4, 1994 @ 01:00:00.000</div><div style="left:1643px;top:1226.4px;font:25.5px/25.5px 'Liberation Mono', monospace;color:#343741;white-space:pre;transform:scaleX(0.9412);transform-origin:0 0"><b style="font-weight:700">author</b><span style="margin-left:16.9px">William Gibson</span><span style="margin-left:16.6px"></span><b style="font-weight:700">page_count</b><span style="margin-left:16.9px">304</span><span style="margin-left:16.6px"></span><b style="font-weight:700">release_date</b><span style="margin-left:16.9px">Sep 4, 1994 @ 01:00:00.000</span><span style="margin-left:16.6px"></span></div><div style="left:1643px;top:1264.7px;font:25.5px/25.5px 'Liberation Mono', monospace;color:#343741;white-space:pre;transform:scaleX(0.9412);transform-origin:0 0"><b style="font-weight:700">title</b><span style="margin-left:16.9px">Idoru</span><span style="margin-left:16.6px"></span><b style="font-weight:700">_id</b><span style="margin-left:16.9px">_Ylc14oBRZeG5hZ_TkoA</span><span style="margin-left:16.6px"></span><b style="font-weight:700">_index</b><span style="margin-left:16.9px">books</span><span style="margin-left:16.6px"></span><b style="font-weight:700">_score</b><span style="margin-left:16.9px"> -</span><span style="margin-left:16.6px"></span></div></div>
</body></html>
